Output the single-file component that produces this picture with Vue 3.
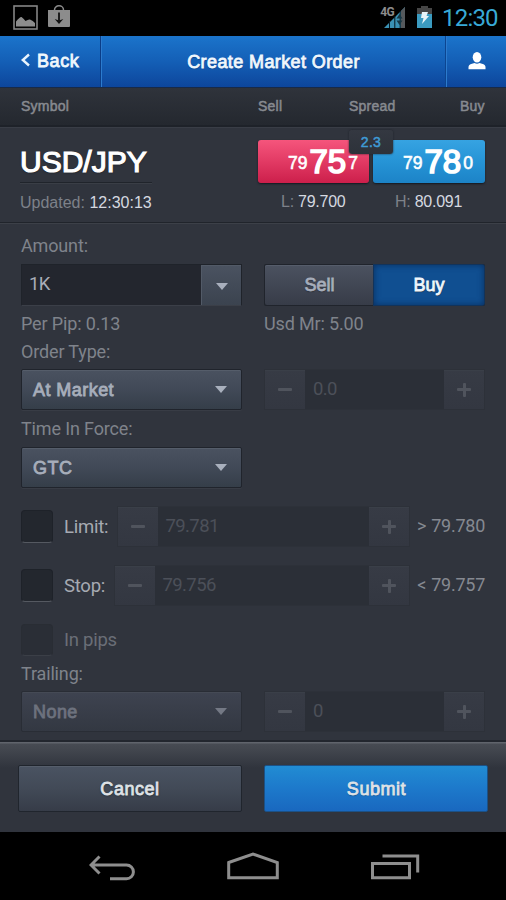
<script setup>
import { h, ref } from 'vue'

const side = ref('Buy')
const amount = ref('1K')

const Stepper = (props) =>
  h('div', { class: 'stepper' }, [
    h('button', { class: 'step minus', 'aria-label': 'Decrease' }, [h('i', { class: 'bar' })]),
    h('span', { class: 'value' }, props.value),
    h('button', { class: 'step plus', 'aria-label': 'Increase' }, [h('i', { class: 'bar' }), h('i', { class: 'bar vert' })]),
  ])
Stepper.props = ['value']
</script>

<template>
  <div class="screen">
    <div class="status">
      <svg class="pic" width="26" height="26" viewBox="0 0 26 26">
        <rect x="1" y="1" width="23" height="23" fill="none" stroke="#858585" stroke-width="1.6" />
        <path d="M3 21.500V16.500q4-5 5.500-4.500 2 1.500 4 4 3-2 4.500-1.500 3 1 5 3.500v3.500z" fill="#8c8c8c" />
      </svg>
      <svg class="bag" width="22" height="24" viewBox="0 0 22 24">
        <path d="M6.500 6V5a4.500 4.200 0 0 1 9 0v1" fill="none" stroke="#8c8c8c" stroke-width="1.500" />
        <path d="M0 5h22v16q0 1-1 1H1q-1 0-1-1z" fill="#8c8c8c" />
        <path d="M11 7.500v9" stroke="#111" stroke-width="1.800" />
        <path d="M6.700 14l4.300 1.500 4.300-1.500-4.300 5z" fill="#111" />
      </svg>
      <span class="spacer"></span>
      <div class="signal">
        <span class="net">4G</span>
        <svg width="22" height="22" viewBox="0 0 22 22">
          <path d="M0 21 21 0v21z" fill="#3a91b4" />
          <path d="M17 4l4-4v21h-4z" fill="#55595c" />
          <path d="M5.500 14v7M10.800 9v12M16.200 4v17" stroke="#061820" stroke-width="1" />
          <path d="M12.500 11.500l3-4.500 3 4.500zM12.500 13.500h6l-3 4.500z" fill="#173744" />
        </svg>
      </div>
      <svg class="battery" width="15" height="22" viewBox="0 0 15 22">
        <path d="M4 0h7v2h4v20H0V2h4z" fill="#464646" />
        <path d="M0 8h15v14H0z" fill="#3b9bc0" />
        <path d="M5 6h6L9.500 10H12l-7 8 1.500-6H4z" fill="#e8f4f8" />
      </svg>
      <span class="clock">12:30</span>
    </div>

    <header class="bar-top">
      <button class="back">
        <svg width="9" height="14" viewBox="0 0 9 14"><path d="M8 1.500 1.800 7l6.200 5.500" fill="none" stroke="#e9f4fd" stroke-width="2.400" /></svg>
        <span>Back</span>
      </button>
      <h1>Create Market Order</h1>
      <button class="user" aria-label="Account">
        <svg width="18" height="18" viewBox="0 0 18 18">
          <ellipse cx="9" cy="5.300" rx="4.300" ry="5.200" fill="#fff" />
          <path d="M.5 17.300V15q0-2.500 3.500-3.300l2.500-.7q2.500 1.500 5 0l2.500.7q3.500.8 3.500 3.300v2.300z" fill="#fff" />
        </svg>
      </button>
    </header>

    <div class="columns">
      <span class="c1">Symbol</span><span class="c2">Sell</span><span class="c3">Spread</span><span class="c4">Buy</span>
    </div>

    <section class="quote">
      <div class="pair">
        <div class="symbol">USD/JPY</div>
        <div class="updated">Updated: <b>12:30:13</b></div>
      </div>
      <div class="prices">
        <div class="price sell"><small>79</small><strong>75</strong><small>7</small></div>
        <div class="price buy"><small>79</small><strong>78</strong><small>0</small></div>
        <span class="spread">2.3</span>
        <div class="range low">L: <b>79.700</b></div>
        <div class="range high">H: <b>80.091</b></div>
      </div>
    </section>

    <main class="form">
      <div class="label amount-label">Amount:</div>
      <div class="pairrow">
        <div class="combo"><span>{{ amount }}</span><button aria-label="Choose amount"><i class="caret"></i></button></div>
        <div class="toggle">
          <button v-for="s in ['Sell', 'Buy']" :key="s" :class="{ on: side === s }" @click="side = s">{{ s }}</button>
        </div>
      </div>
      <div class="pairrow captions"><div class="label pip">Per Pip: 0.13</div><div class="label mr">Usd Mr: 5.00</div></div>

      <div class="label order-label">Order Type:</div>
      <div class="pairrow">
        <div class="select"><span>At Market</span><i class="caret"></i></div>
        <Stepper value="0.0" />
      </div>

      <div class="label tif-label">Time In Force:</div>
      <div class="pairrow"><div class="select"><span>GTC</span><i class="caret"></i></div></div>

      <div class="condition limit">
        <i class="check"></i><span class="name">Limit:</span><Stepper value="79.781" /><span class="bound"><em>&gt;</em> 79.780</span>
      </div>
      <div class="condition stop">
        <i class="check"></i><span class="name">Stop:</span><Stepper value="79.756" /><span class="bound"><em>&lt;</em> 79.757</span>
      </div>
      <div class="condition pips"><i class="check"></i><span class="name">In pips</span></div>

      <div class="label trail-label">Trailing:</div>
      <div class="pairrow">
        <div class="select dim"><span>None</span><i class="caret"></i></div>
        <Stepper value="0" />
      </div>
    </main>

    <footer class="actions">
      <button class="cancel">Cancel</button>
      <button class="submit">Submit</button>
    </footer>

    <nav class="softkeys">
      <svg width="48" height="27" viewBox="0 0 48 27" fill="none" stroke="#8e8e8e" stroke-width="3">
        <path d="M10.500 1.500 2 10l8.500 8.500M2 10h35.500a6.900 6.900 0 0 1 0 13.800H21" />
      </svg>
      <svg width="52" height="28" viewBox="0 0 52 28" fill="none" stroke="#8e8e8e" stroke-width="3">
        <path d="M1.700 10.500 26 2.100l24.300 8.400v15.300H1.700z" />
      </svg>
      <svg width="49" height="26" viewBox="0 0 49 26" fill="none" stroke="#8e8e8e" stroke-width="3">
        <path d="M1.500 9.500h37v14.300h-37zM11.500 2h35.200v16.500" />
      </svg>
    </nav>
  </div>
</template>

<style>
body { margin: 0; background: #000; }
</style>

<style scoped>
.screen { width: 506px; height: 900px; display: flex; flex-direction: column; overflow: hidden; background: #30343d; font-family: "Liberation Sans", Arial, sans-serif; }
.screen :deep(*) { box-sizing: border-box; }
button { border: 0; padding: 0; margin: 0; background: none; font: inherit; color: inherit; }
b, em { font-weight: 400; font-style: normal; }
svg { display: block; flex: none; }

.status { height: 36px; flex: none; background: #000; display: flex; align-items: flex-start; padding: 5px 9px 0 13px; }
.bag { margin: 0 0 0 9px; }
.spacer { flex: 1; }
.signal { display: flex; align-items: flex-start; padding-top: 2px; }
.net { font: 700 12px/11px Roboto, sans-serif; letter-spacing: -.6px; color: #8c8c8c; margin-right: -10px; position: relative; z-index: 1; }
.battery { margin: 1px 0 0 11px; }
.clock { font: 400 24px/28px Roboto, sans-serif; color: #38a9d6; margin-left: 10px; width: 55px; letter-spacing: -.8px; white-space: nowrap; margin-top: -1px; }

.bar-top { height: 52px; flex: none; display: flex; background: linear-gradient(#1b74cb, #145fb6 50%, #0d469c); border-bottom: 1px solid #172a49; color: #f0f7fd; -webkit-text-stroke: .8px; text-shadow: 0 1px 1px #0b3c83; }
.back { width: 101px; display: flex; align-items: center; gap: 7px; padding: 0 0 0 21px; border-right: 1px solid #0b3d87; box-shadow: 1px 0 #2c7bce; font-size: 18px; letter-spacing: .6px; }
.back svg { margin-top: -3px; }
.bar-top h1 { flex: 1; margin: 0; text-align: center; font-size: 18px; font-weight: 400; line-height: 52px; letter-spacing: .4px; padding-left: 0; }
.user { width: 60px; display: flex; justify-content: center; padding: 16px 0 0 1px; border-left: 1px solid #2c7bce; box-shadow: -1px 0 #0c4590; }

.columns { height: 39px; flex: none; display: flex; background: linear-gradient(#2f333b, #24282f); border-bottom: 2px solid #1e2229; box-shadow: 0 1px #393d46; color: #878a90; -webkit-text-stroke: .5px; font-size: 14px; line-height: 36px; letter-spacing: .25px; padding-left: 21px; }
.c1 { width: 237px; } .c2 { width: 91px; } .c3 { width: 111px; }

.quote { height: 96px; flex: none; display: flex; justify-content: space-between; padding: 13px 21px 0 20px; position: relative; border-bottom: 1px solid #20242b; box-shadow: 0 1px #3c4048; }
.pair { width: 132px; }
.symbol { height: 43px; font-size: 30px; -webkit-text-stroke: 1.200px; line-height: 43px; color: #fff; border-bottom: 1px solid #20242b; box-shadow: 0 1px #3a3e46; white-space: nowrap; text-shadow: 0 1px 2px #1c1f26; }
.updated { color: #7d8189; font-size: 16px; line-height: 39px; white-space: nowrap; }
.updated b, .range b { color: #d5d9e0; }
.prices { width: 227px; display: grid; grid-template-columns: 111px 112px; column-gap: 4px; grid-template-rows: 42px 38px; position: relative; }
.price { display: flex; align-items: center; color: #fff; border-radius: 3px; box-shadow: 0 1px 2px #14181f; padding-left: 30px; height: 43px; padding-top: 4px; }
.price.sell { background: linear-gradient(#f5557c, #e23a64 50%, #cc1f4b); }
.price.buy { background: linear-gradient(#36a3e2, #2694d6 50%, #1c83c7); }
.price small { font-size: 17.500px; -webkit-text-stroke: .6px; }
.price strong { font-size: 33px; font-weight: 400; -webkit-text-stroke: 1.700px; margin: -3px 2px 0; line-height: 30px; }
.spread { position: absolute; left: 91px; top: -10px; width: 44px; height: 24px; border-radius: 3px; background: linear-gradient(#343841, #2d323a); box-shadow: 0 0 2px #1b1f26; color: #3f9bd6; font-size: 14px; -webkit-text-stroke: .5px; line-height: 24px; text-align: center; letter-spacing: .3px; }
.range { color: #7d8189; font-size: 16px; line-height: 39px; padding-left: 23px; white-space: nowrap; letter-spacing: -.25px; }
.range.high { padding-left: 22px; }

.form { flex: 1; padding: 11px 21px 0; font-family: Roboto, sans-serif; }
.label { height: 24px; line-height: 24px; font-size: 18px; color: #7f838b; white-space: nowrap; letter-spacing: -.15px; }
.pairrow { display: grid; grid-template-columns: 221px 221px; column-gap: 22px; height: 41px; }
.amount-label { margin-bottom: 6px; }
.captions { height: 24px; margin: 7px 0 4px; }
.order-label { margin-bottom: 5px; }
.tif-label { margin: 7px 0 6px; }
.combo { display: flex; background: #23262e; border: 1px solid #1f232a; border-bottom-color: #3b3f48; color: #a9adb8; font-size: 18.500px; letter-spacing: -.6px; line-height: 39px; }
.combo span { flex: 1; padding-left: 7px; }
.combo button { width: 40px; display: flex; align-items: center; justify-content: center; padding-top: 1px; background: linear-gradient(#4a5260, #3b434f); border: 1px solid #525a67; border-width: 1px 0 0 1px; }
.caret { width: 0; height: 0; border: 6px solid transparent; border-top: 7px solid #a9b0bd; border-bottom: 0; }
.toggle { display: flex; background: #20242c; padding: 1px; border-radius: 2px; font: 400 18px/40px "Liberation Sans", sans-serif; -webkit-text-stroke: .8px; letter-spacing: .5px; }
.toggle button { width: 109px; line-height: 40px; background: linear-gradient(#4b5260, #373c48); color: #a7aebb; box-shadow: inset 0 1px #565d6b; border-radius: 2px 0 0 2px; text-shadow: 0 1px 1px #262a32; }
.toggle button + button { flex: 1; border-radius: 0 2px 2px 0; }
.toggle button.on { background: #104f91; color: #eff6fc; box-shadow: inset 0 0 6px #082f60, 0 0 0 1px #12335a; }
.select { display: flex; justify-content: space-between; align-items: center; padding: 0 14px 0 11px; border: 1px solid #20242c; border-radius: 2px; background: linear-gradient(#4a5260, #414957 50%, #353e49); box-shadow: inset 0 1px #555d6a, 0 1px #383c45; color: #a7aebb; font: 400 18px "Liberation Sans", sans-serif; -webkit-text-stroke: .8px; letter-spacing: .45px; }
.select span { padding-top: 2px; }
.dim { background: linear-gradient(#3e4350, #333842); border-color: #292d35; box-shadow: inset 0 1px #454a55; color: #6d727e; }
.dim .caret { border-top-color: #747985; }

.screen :deep(.stepper) { display: flex; flex: 1; height: 41px; background: #2b2f37; border: 1px solid #2d3139; }
.screen :deep(.step) { width: 40px; flex: none; border: 0; padding: 0; background: linear-gradient(#373b45, #333741); box-shadow: inset 0 1px #3a3f48; display: grid; place-items: center; }
.screen :deep(.bar) { grid-area: 1 / 1; width: 14px; height: 3px; border-radius: 1px; background: #50545d; }
.screen :deep(.vert) { width: 3px; height: 14px; }
.screen :deep(.value) { flex: 1; padding-left: 8px; color: #4c5059; font: 400 18.500px/38px Roboto, sans-serif; letter-spacing: -.6px; }

.condition { display: flex; align-items: center; height: 41px; font-size: 18.500px; letter-spacing: -.25px; color: #a6aab2; white-space: nowrap; }
.limit { margin-top: 18px; }
.stop { margin-top: 18px; }
.pips { height: 32px; margin-top: 18px; line-height: 30px; color: #6a6e77; }
.check { width: 32px; height: 33px; border-radius: 4px; background: #23272e; border: 1px solid #1e2229; border-bottom-color: #555961; margin-right: 11px; flex: none; }
.pips .check { background: #2a2e36; border-color: #292d34; border-bottom-color: #3b3f47; height: 32px; }
.name { width: 52.500px; }
.stop .name { width: 49.500px; }
.bound { width: 75px; padding-bottom: 2px; text-align: right; color: #858991; font-size: 18px; word-spacing: .8px; }
.trail-label { margin: 6px 0 5px; }

.actions { height: 92px; flex: none; display: grid; grid-template-columns: 224px 224px; column-gap: 22px; padding: 23px 18px 20px; border-top: 2px solid #22262e; background: linear-gradient(#60646c 1px, #474b53 2px, #40444c 10px, #30343d 26px); }
.actions button { height: 47px; border: 1px solid #20252d; border-radius: 2px; color: #dfe2e6; font-size: 18px; -webkit-text-stroke: .8px; padding-top: 2px; letter-spacing: .55px; text-shadow: 0 1px 2px #242931; }
.cancel { background: linear-gradient(#4a5362, #424a57 50%, #363c48); box-shadow: inset 0 1px #565e6b; }
.actions .submit { background: linear-gradient(#218cd3, #1d79cb 50%, #1968bf); border-color: #1c5186; text-shadow: 0 1px 1px #154d86; padding-left: 1px; }
.softkeys { height: 68px; flex: none; background: #000; display: flex; padding: 20px 0 0 89px; }
.softkeys svg { margin-top: 3px; }
.softkeys svg:nth-child(2) { margin: 0 0 0 90px; }
.softkeys svg:nth-child(3) { margin: 2px 0 0 92px; }
</style>
